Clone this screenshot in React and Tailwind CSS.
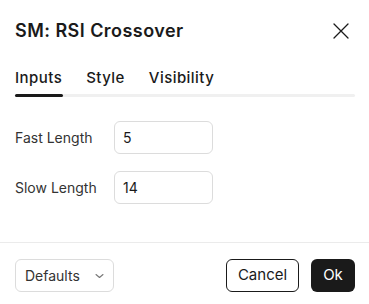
import React from 'react';

const fields = [
  { label: 'Fast Length', value: '5' },
  { label: 'Slow Length', value: '14' },
];

const App = () => {
  return (
    <div className="w-[369px] h-[304px] bg-white flex flex-col text-[#1a1a1a]" style={{ fontFamily: 'Inter, "Noto Sans", sans-serif' }}>
      {/* header */}
      <div className="flex items-center justify-between pl-[15px] pr-[20px] pt-[20px]">
        <h1 className="text-[18px] leading-[22px] font-semibold tracking-[0.45px]">SM: RSI Crossover</h1>
        <button className="w-[16px] h-[16px] flex items-center justify-center text-[#1a1a1a]">
          <svg width="16" height="16" viewBox="0 0 16 16" fill="none" stroke="currentColor" strokeWidth="1.3" strokeLinecap="round">
            <path d="M1 1L15 15M15 1L1 15" />
          </svg>
        </button>
      </div>

      {/* tabs */}
      <div className="px-[15px] pr-[14px] mt-[26px]">
        <div className="flex gap-[24px] text-[15px] leading-[20px] font-medium tracking-[0.45px]">
          <span>Inputs</span>
          <span>Style</span>
          <span>Visibility</span>
        </div>
        <div className="mt-[6px] h-[3px] rounded-full bg-[#f0f0f0]">
          <div className="h-[3px] w-[48px] rounded-full bg-[#1a1a1a]" />
        </div>
      </div>

      {/* inputs */}
      <div className="flex flex-col gap-[17px] px-[15px] mt-[24px]">
        {fields.map((f) => (
          <div key={f.label} className="flex items-center">
            <span className="w-[99px] text-[14px] text-[#333]">{f.label}</span>
            <div className="w-[99px] h-[33px] rounded-[6px] border border-[#dcdcdc] flex items-center pl-[8px] text-[14px] text-[#1a1a1a]">
              {f.value}
            </div>
          </div>
        ))}
      </div>

      {/* footer */}
      <div className="mt-auto border-t border-[#ebebeb] flex items-center justify-between pl-[15px] pr-[14px] pt-[16px] pb-[12px]">
        <div className="w-[99px] h-[33px] rounded-[6px] border border-[#dcdcdc] flex items-center justify-between pl-[9px] pr-[9px] text-[14px] text-[#333]">
          <span>Defaults</span>
          <svg width="9" height="6" viewBox="0 0 9 6" fill="none" stroke="#777" strokeWidth="1.1" strokeLinecap="round" strokeLinejoin="round">
            <path d="M1 1.5L4.5 4.5L8 1.5" />
          </svg>
        </div>
        <div className="flex gap-[12px]">
          <button className="w-[73px] h-[33px] rounded-[6px] border border-[#1a1a1a] text-[15px] text-[#1a1a1a] flex items-center justify-center">Cancel</button>
          <button className="w-[44px] h-[33px] rounded-[6px] bg-[#1a1a1a] text-[15px] text-white flex items-center justify-center">Ok</button>
        </div>
      </div>
    </div>
  );
};

export default App;
